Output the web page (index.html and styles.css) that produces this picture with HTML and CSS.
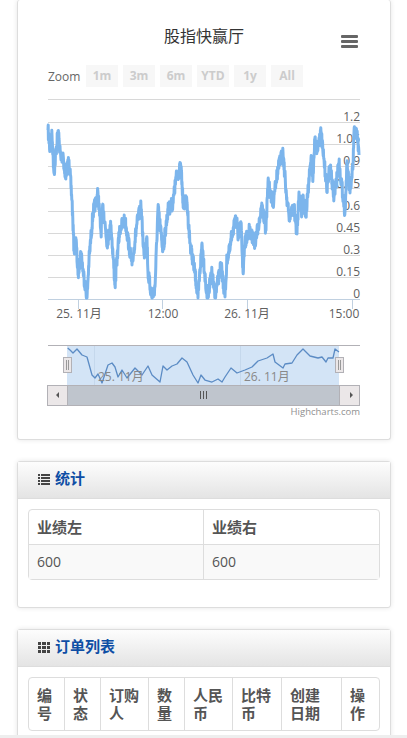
FILE: index.html
```html
<!DOCTYPE html>
<html lang="zh-CN">
  <head>
    <meta charset="UTF-8" />
    <meta name="viewport" content="width=device-width, initial-scale=1.0" />
    <title>股指快赢厅</title>
    <link rel="stylesheet" href="styles.css">
  </head>
  <body>
    <div class="box box-chart">
      <svg class="chart" width="372" height="439" viewBox="18 0 372 439">
        <text class="chart-title" x="204" y="42">股指快赢厅</text>
        <g class="menu-icon">
          <rect x="341" y="35" width="17" height="3" rx="1" />
          <rect x="341" y="40" width="17" height="3" rx="1" />
          <rect x="341" y="45" width="17" height="3" rx="1" />
        </g>

        <text class="zoom-label" x="48" y="81">Zoom</text>
        <g class="range-btns">
          <rect x="86" y="65" width="32" height="22" />
          <rect x="123" y="65" width="32" height="22" />
          <rect x="160" y="65" width="32" height="22" />
          <rect x="197" y="65" width="32" height="22" />
          <rect x="234" y="65" width="32" height="22" />
          <rect x="271" y="65" width="32" height="22" />
        </g>
        <g class="range-text">
          <text x="102" y="80">1m</text>
          <text x="139" y="80">3m</text>
          <text x="176" y="80">6m</text>
          <text x="213" y="80">YTD</text>
          <text x="250" y="80">1y</text>
          <text x="287" y="80">All</text>
        </g>

        <g class="grid">
          <path d="M48 99.5H360M48 122.5H360M48 144.5H360M48 166.5H360M48 188.5H360M48 211.5H360M48 233.5H360M48 255.5H360M48 277.5H360" />
        </g>
        <path class="axis" d="M48 299.5H360M78.5 300V309M162.5 300V309M247.5 300V309M352.5 300V309" />

        <g class="y-labels">
          <text x="360" y="121">1.2</text>
          <text x="360" y="143">1.05</text>
          <text x="360" y="165">0.9</text>
          <text x="360" y="188">0.75</text>
          <text x="360" y="210">0.6</text>
          <text x="360" y="232">0.45</text>
          <text x="360" y="254">0.3</text>
          <text x="360" y="276">0.15</text>
          <text x="360" y="298">0</text>
        </g>
        <g class="x-labels">
          <text x="79" y="318">25. 11月</text>
          <text x="163" y="318">12:00</text>
          <text x="247" y="318">26. 11月</text>
          <text x="344" y="318">15:00</text>
        </g>

        <path id="mainLine" class="main-line" d="" />

        <!-- navigator -->
        <rect class="nav-selected" x="67" y="346" width="272" height="39" />
        <path class="nav-ticks" d="M94.5 346V385M240.5 346V385" />
        <path class="nav-top" d="M48 345.5H360" />
        <polyline class="nav-line" points="67.7,348 70,350 73,353 77,349 82,355 87,357 92,375 95,378 98,374 102,383 108,365 112,363 115,367 118,377 122,370 127,378 135,368 142,375 148,366 152,375 160,382 163,366 167,370 172,366 177,364 182,358 187,362 193,375 198,383 201,375 205,380 212,382 218,379 222,382 225,377 231,368 237,373 245,370 252,367 258,361 267,358 273,354 275,362 283,368 285,364 292,363 297,355 303,349 310,356 318,358 322,357 326,362 328,358 333,358 335,349 339,352" />
        <g class="nav-labels">
          <text x="98" y="381">25. 11月</text>
          <text x="244" y="381">26. 11月</text>
        </g>
        <g class="nav-handle">
          <rect x="63.5" y="357.5" width="8" height="15" />
          <path d="M66.5 360V370M68.5 360V370" />
          <rect x="335.5" y="357.5" width="8" height="15" />
          <path d="M338.5 360V370M340.5 360V370" />
        </g>

        <!-- scrollbar -->
        <rect class="scroll-track" x="47.5" y="385.5" width="312" height="20" />
        <rect class="scroll-btn" x="47.5" y="385.5" width="20" height="20" />
        <rect class="scroll-btn" x="339.5" y="385.5" width="20" height="20" />
        <path class="scroll-arrow" d="M59 392V398L56 395ZM350 392V398L353 395Z" />
        <path class="scroll-grip" d="M200.5 391V399M203.5 391V399M206.5 391V399" />

        <text class="credits" x="360" y="415">Highcharts.com</text>
      </svg>
    </div>

    <div class="box">
      <div class="box-title">
        <svg class="title-icon" width="12" height="12" viewBox="0 0 12 12">
          <path d="M0 1H2V3H0ZM3 1H12V3H3ZM0 4H2V6H0ZM3 4H12V6H3ZM0 7H2V9H0ZM3 7H12V9H3ZM0 10H2V12H0ZM3 10H12V12H3Z" />
        </svg>
        <h2>统计</h2>
      </div>
      <div class="box-content">
        <table class="stats-table">
          <tr>
            <th class="left-col">业绩左</th>
            <th>业绩右</th>
          </tr>
          <tr>
            <td>600</td>
            <td>600</td>
          </tr>
        </table>
      </div>
    </div>

    <div class="box">
      <div class="box-title">
        <svg class="title-icon" width="12" height="12" viewBox="0 0 12 12">
          <path d="M0 1H3V4H0ZM4 1H8V4H4ZM9 1H12V4H9ZM0 5H3V8H0ZM4 5H8V8H4ZM9 5H12V8H9ZM0 9H3V12H0ZM4 9H8V12H4ZM9 9H12V12H9Z" />
        </svg>
        <h2>订单列表</h2>
      </div>
      <div class="box-content">
        <table class="order-table">
          <tr>
            <th class="c1">编号</th>
            <th class="c2">状态</th>
            <th class="c3">订购人</th>
            <th class="c4">数量</th>
            <th class="c5">人民币</th>
            <th class="c6">比特币</th>
            <th class="c7">创建日期</th>
            <th class="c8">操作</th>
          </tr>
        </table>
      </div>
    </div>

    <div class="bottom-bar"></div>

    <script>
      // 折线关键点，中间加抖动
      const points = [
        [48,130],[50,150],[52,135],[54,173],[58,131],[61,160],[63,153],[65,177],[69,160],[72,200],
        [74,250],[76,240],[78,275],[81,252],[83,270],[87,298],[89,260],[93,213],[98,193],[101,233],
        [103,205],[107,243],[111,225],[115,285],[118,247],[120,228],[125,220],[132,265],[137,223],[141,207],
        [144,255],[147,238],[148,273],[152,298],[155,287],[158,208],[163,250],[168,210],[173,203],[176,178],
        [181,167],[183,202],[187,203],[190,243],[195,273],[198,298],[202,243],[207,298],[212,273],[215,297],
        [221,265],[225,297],[227,258],[230,250],[232,233],[237,218],[238,240],[241,225],[243,272],[245,243],
        [249,230],[255,243],[258,227],[262,207],[266,230],[268,182],[273,205],[275,185],[279,165],[283,152],
        [286,190],[289,217],[294,208],[297,234],[299,192],[302,213],[303,195],[306,215],[311,158],[313,177],
        [315,137],[317,150],[321,132],[323,153],[327,187],[330,167],[334,197],[339,163],[345,212],[347,165],
        [350,193],[353,167],[354,132],[357,133],[359,155],
      ];

      let seed = 7;
      function rand() {
        seed = (seed * 16807) % 2147483647;
        return seed / 2147483647 - 0.5;
      }

      let d = "M48 130";
      for (let i = 1; i < points.length; i++) {
        const [x0, y0] = points[i - 1];
        const [x1, y1] = points[i];
        const steps = Math.max(3, Math.round((x1 - x0) * 5));
        for (let s = 1; s <= steps; s++) {
          const t = s / steps;
          const jitter = s === steps ? 0 : rand() * 14;
          const y = Math.min(298, y0 + (y1 - y0) * t + jitter);
          d += ` L${(x0 + (x1 - x0) * t).toFixed(1)} ${y.toFixed(1)}`;
        }
      }
      document.getElementById("mainLine").setAttribute("d", d);
    </script>
  </body>
</html>
```

FILE: styles.css
```css
html,
body {
  height: 738px;
  overflow: hidden;
}
body {
  margin: 0;
  padding: 0 16px 0 17px;
  background-color: #fff;
  font-family: "Open Sans", "Noto Sans CJK SC", sans-serif;
  color: #555;
}
.box {
  margin-bottom: 21px;
  background-color: #fff;
  border: 1px solid #ddd;
  border-radius: 3px;
  box-shadow: 0 0 5px rgba(0, 0, 0, 0.1);
}
.box-chart {
  border-top: none;
  height: 439px;
}
.chart {
  display: block;
}
.chart-title {
  font-size: 16px;
  fill: #333;
  text-anchor: middle;
}
.menu-icon {
  fill: #666;
}
.zoom-label {
  font-size: 12px;
  fill: #666;
}
.range-btns {
  fill: #f7f7f7;
}
.range-text {
  font-size: 12px;
  font-weight: bold;
  fill: #ccc;
  text-anchor: middle;
}
.grid {
  fill: none;
  stroke: #d8d8d8;
  stroke-width: 1;
}
.axis {
  fill: none;
  stroke: #c0d0e0;
  stroke-width: 1;
}
.y-labels {
  font-size: 12px;
  fill: #606060;
  text-anchor: end;
}
.x-labels {
  font-size: 12px;
  fill: #606060;
  text-anchor: middle;
}
.main-line {
  fill: none;
  stroke: #7cb5ec;
  stroke-width: 3;
  stroke-linejoin: round;
}
.nav-selected {
  fill: #d3e4f6;
}
.nav-ticks {
  fill: none;
  stroke: #c5d8ec;
}
.nav-top {
  fill: none;
  stroke: #b2b1b6;
}
.nav-line {
  fill: none;
  stroke: #5b8bc4;
  stroke-width: 1.3;
  stroke-linejoin: round;
}
.nav-labels {
  font-size: 12px;
  fill: #888;
}
.nav-handle rect {
  fill: #ebe7e8;
  stroke: #b2b1b6;
}
.nav-handle path {
  fill: none;
  stroke: #999;
}
.scroll-track {
  fill: #bfc5cd;
  stroke: #b2b1b6;
}
.scroll-btn {
  fill: #ebe7e8;
  stroke: #b2b1b6;
}
.scroll-arrow {
  fill: #555;
}
.scroll-grip {
  fill: none;
  stroke: #555;
}
.credits {
  font-size: 9.5px;
  fill: #909090;
  text-anchor: end;
}
.box-title {
  display: flex;
  align-items: center;
  gap: 5px;
  box-sizing: border-box;
  height: 37px;
  padding: 0 0 1px 20px;
  background: linear-gradient(to bottom, #fdfdfd, #e4e4e4);
  border-bottom: 1px solid #ddd;
}
.title-icon {
  fill: #444;
  margin-bottom: 2px;
}
.box-title h2 {
  margin: 0 0 3px;
  font-size: 15px;
  line-height: 18px;
  font-weight: bold;
  color: #0e4ea5;
}
.box-content {
  padding: 10px 10px 27px;
}
table {
  width: 100%;
  border-collapse: separate;
  border-spacing: 0;
  border: 1px solid #ddd;
  border-radius: 4px;
  font-size: 15px;
  line-height: 18px;
  table-layout: fixed;
}
th,
td {
  box-sizing: border-box;
  padding: 8px;
  text-align: left;
  vertical-align: top;
  border-left: 1px solid #ddd;
}
th:first-child,
td:first-child {
  border-left: none;
}
th {
  font-weight: bold;
}
.stats-table .left-col {
  width: 174px;
}
.stats-table td {
  font-size: 14px;
  background-color: #f9f9f9;
  border-top: 1px solid #ddd;
}
.order-table .c1 {
  width: 35px;
}
.order-table .c2,
.order-table .c4 {
  width: 36px;
}
.order-table .c3,
.order-table .c5 {
  width: 48px;
}
.order-table .c6 {
  width: 49px;
}
.order-table .c7 {
  width: 60px;
}
.bottom-bar {
  position: fixed;
  left: 0;
  right: 0;
  bottom: 0;
  height: 3px;
  background-color: #eee;
}
```
